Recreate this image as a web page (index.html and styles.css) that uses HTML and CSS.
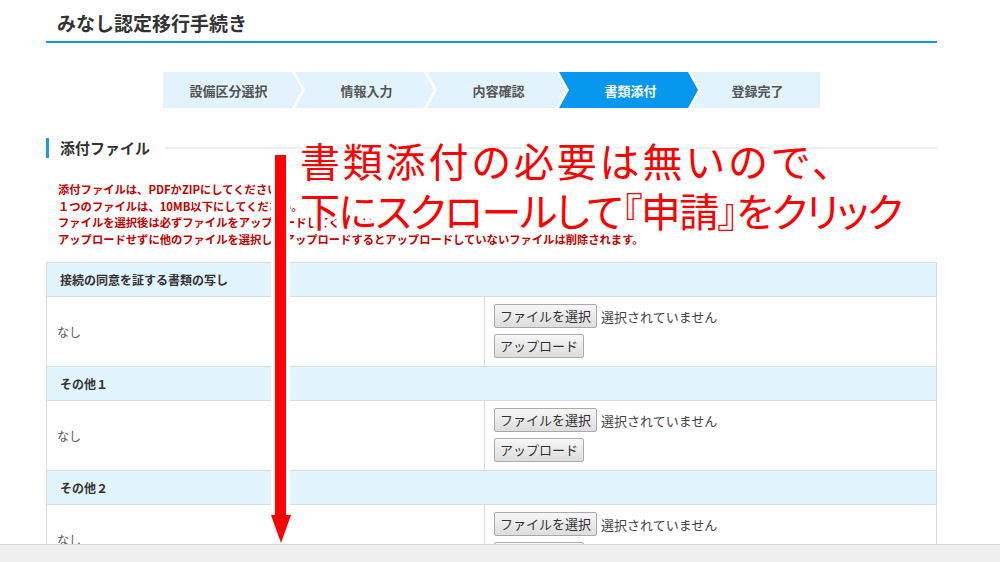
FILE: index.html
```html
<!DOCTYPE html>
<html lang="ja">
<head>
<meta charset="utf-8">
<title>みなし認定移行手続き</title>
<link rel="stylesheet" href="styles.css">
</head>
<body>
<div class="page">
  <div class="viewport">
    <div class="wrap">
      <h1 class="title">みなし認定移行手続き</h1>
      <ol class="steps">
        <li class="step first">設備区分選択</li>
        <li class="step">情報入力</li>
        <li class="step">内容確認</li>
        <li class="step active">書類添付</li>
        <li class="step last">登録完了</li>
      </ol>
      <h2 class="sec"><span class="sec-label">添付ファイル</span><span class="sec-rule"></span></h2>
      <ul class="notes">
        <li>添付ファイルは、PDFかZIPにしてください。</li>
        <li>１つのファイルは、10MB以下にしてください。</li>
        <li>ファイルを選択後は必ずファイルをアップロードしてください。</li>
        <li>アップロードせずに他のファイルを選択してアップロードするとアップロードしていないファイルは削除されます。</li>
      </ul>
      <table class="files">
        <tr class="hd"><th colspan="2">接続の同意を証する書類の写し</th></tr>
        <tr class="bd">
          <td class="name">なし</td>
          <td class="act">
            <div class="pick"><button class="btn">ファイルを選択</button><span class="none">選択されていません</span></div>
            <div class="up"><button class="btn">アップロード</button></div>
          </td>
        </tr>
        <tr class="hd"><th colspan="2">その他１</th></tr>
        <tr class="bd">
          <td class="name">なし</td>
          <td class="act">
            <div class="pick"><button class="btn">ファイルを選択</button><span class="none">選択されていません</span></div>
            <div class="up"><button class="btn">アップロード</button></div>
          </td>
        </tr>
        <tr class="hd"><th colspan="2">その他２</th></tr>
        <tr class="bd">
          <td class="name">なし</td>
          <td class="act">
            <div class="pick"><button class="btn">ファイルを選択</button><span class="none">選択されていません</span></div>
            <div class="up"><button class="btn">アップロード</button></div>
          </td>
        </tr>
      </table>
    </div>

    <div class="annot">
      <p class="annot-l1">書類添付の必要は無いので、</p>
      <p class="annot-l2">下にスクロールして『申請』をクリック</p>
    </div>

    <svg class="arrow" width="30" height="400" viewBox="0 0 30 400" aria-hidden="true">
      <g fill="#fff" stroke="#fff" stroke-width="8" stroke-linejoin="miter">
        <rect x="9" y="7" width="11" height="362"/>
        <polygon points="5,367 25,367 15,395"/>
      </g>
      <g fill="#ff0000">
        <rect x="9" y="7" width="11" height="362"/>
        <polygon points="5,367 25,367 15,395"/>
      </g>
    </svg>
  </div>
  <div class="statusbar"></div>
</div>
</body>
</html>
```

FILE: styles.css
```css
html, body {
  margin: 0;
  padding: 0;
  background: #fff;
}

body {
  font-family: "Noto Sans CJK JP", "Noto Sans", sans-serif;
  color: #333;
  overflow: hidden;
}

.page {
  width: 1000px;
  height: 562px;
  display: flex;
  flex-direction: column;
}

.viewport {
  position: relative;
  flex: 1 1 auto;
  overflow: hidden;
}

.wrap {
  width: 891px;
  margin-left: 46px;
}

/* title */
.title {
  margin: 0;
  box-sizing: border-box;
  height: 43px;
  padding: 10px 0 0 11px;
  font-size: 19px;
  line-height: 25px;
  font-weight: 700;
  color: #333;
  border-bottom: 2px solid #0a99ea;
}

/* steps */
.steps {
  list-style: none;
  margin: 29px auto 0;
  padding: 0;
  width: 657px;
  height: 36px;
  display: flex;
}

.step {
  box-sizing: border-box;
  flex: 0 0 139px;
  margin-right: -7px;
  height: 36px;
  display: flex;
  align-items: center;
  justify-content: center;
  background: #e2f3fd;
  color: #555;
  font-size: 13px;
  font-weight: 700;
  clip-path: polygon(0 0, calc(100% - 10px) 0, 100% 50%, calc(100% - 10px) 100%, 0 100%, 10px 50%);
  padding-left: 4px;
}

.step.first {
  clip-path: polygon(0 0, calc(100% - 10px) 0, 100% 50%, calc(100% - 10px) 100%, 0 100%);
  padding-left: 0;
  padding-right: 8px;
}

.step.last {
  flex-basis: 129px;
  margin-right: 0;
  clip-path: polygon(0 0, 100% 0, 100% 100%, 0 100%, 10px 50%);
}

.step.active {
  background: #0897ef;
  color: #fff;
}

/* section heading */
.sec {
  margin: 30px 0 0;
  display: flex;
  align-items: center;
  height: 20px;
  border-left: 3px solid #1a9be6;
  padding-left: 11px;
  font-size: 15px;
  font-weight: 700;
  line-height: 20px;
  color: #333;
}

.sec-rule {
  flex: 1 1 auto;
  height: 2px;
  margin-left: 15px;
  background: #eee;
}

/* notes */
.notes {
  list-style: none;
  margin: 23px 0 0;
  padding: 0 0 0 12px;
  color: #c40000;
  font-size: 11.3px;
  font-weight: 700;
  line-height: 16.5px;
}

/* table */
.files {
  margin-top: 15px;
  width: 891px;
  border-collapse: collapse;
  font-size: 12px;
}

.files th,
.files td {
  border: 1px solid #dcdcdc;
}

.files .hd th {
  height: 33px;
  padding: 0 13px;
  text-align: left;
  font-weight: 700;
  color: #333;
  background: #e2f4fd;
}

.files .bd td {
  height: 69px;
  padding: 0;
  vertical-align: middle;
}

.files .name {
  box-sizing: border-box;
  width: 438px;
  padding-left: 10px !important;
  color: #555;
}

.files .bd .act {
  height: 62px;
  vertical-align: top;
  padding: 7px 0 0 9px;
}

.pick,
.up {
  display: flex;
  align-items: center;
}

.up {
  margin-top: 6px;
}

.btn {
  box-sizing: border-box;
  height: 24px;
  padding: 0 5px;
  margin: 0;
  border: 1px solid #a9a9a9;
  border-radius: 2px;
  background: linear-gradient(#f7f7f7, #dddddd);
  font-family: "Noto Sans CJK JP", sans-serif;
  font-size: 13px;
  line-height: 20px;
  color: #333;
}

.none {
  margin-left: 4px;
  font-size: 13px;
  color: #444;
}

/* annotation overlay */
.annot {
  position: absolute;
  left: 300px;
  top: 135px;
  color: #ff0000;
  font-size: 40px;
  font-weight: 400;
  line-height: 50px;
  white-space: nowrap;
  text-shadow:
    3px 0 #fff, -3px 0 #fff, 0 3px #fff, 0 -3px #fff,
    2px 2px #fff, -2px 2px #fff, 2px -2px #fff, -2px -2px #fff,
    4px 0 #fff, -4px 0 #fff, 0 4px #fff, 0 -4px #fff;
}

.annot p {
  margin: 0;
}

.annot-l1 {
  letter-spacing: 2.8px;
}

.annot-l2 {
  font-feature-settings: "palt";
  letter-spacing: -1.5px;
}

.arrow {
  position: absolute;
  left: 266px;
  top: 148px;
}

/* bottom bar */
.statusbar {
  flex: 0 0 18px;
  box-sizing: border-box;
  background: #f0f0f0;
  border-top: 1px solid #d9d9d9;
}
```
